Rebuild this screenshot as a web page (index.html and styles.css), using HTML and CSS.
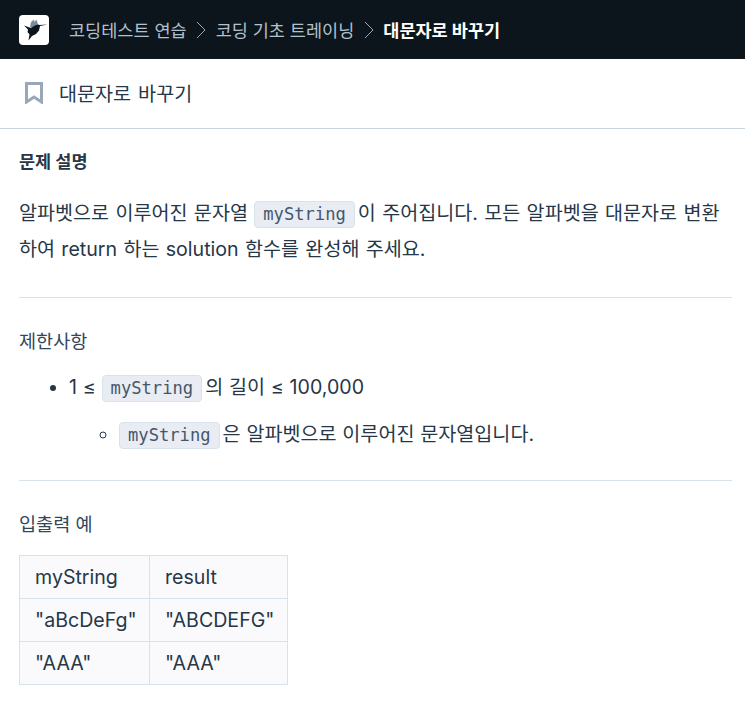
FILE: index.html
```html
<!DOCTYPE html>
<html lang="ko">
<head>
<meta charset="utf-8">
<title>대문자로 바꾸기</title>
<link rel="stylesheet" href="styles.css">
</head>
<body>
<nav class="topbar">
  <div class="logo">
    <svg width="30" height="30" viewBox="0 0 30 30">
      <path class="wing" d="M11 12l1-5 3-2.500.5 2.500 2-2.500 1.500 5-3 5z"/>
      <path class="bird" d="M5 10.500l7 2.500 4-2.500 3-1 1.500 .5 8-.5-7.500 1.500-1 4.500-3 3.500-4 2-3.500 4.500 1-6-2-2.500.5-2.500z"/>
    </svg>
  </div>
  <ol class="crumbs">
    <li class="crumb">코딩테스트 연습</li>
    <li class="sep"><svg width="10" height="18" viewBox="0 0 10 18"><path d="M1 1l8 8-8 8"/></svg></li>
    <li class="crumb">코딩 기초 트레이닝</li>
    <li class="sep"><svg width="10" height="18" viewBox="0 0 10 18"><path d="M1 1l8 8-8 8"/></svg></li>
    <li class="crumb current">대문자로 바꾸기</li>
  </ol>
</nav>
<header class="titlebar">
  <svg class="bookmark" width="18" height="22" viewBox="0 0 18 22"><path d="M1.500 1.500h15v18.500l-7.500-5-7.500 5z"/></svg>
  <span class="title">대문자로 바꾸기</span>
</header>
<main class="content">
  <h5 class="heading">문제 설명</h5>
  <p class="para">알파벳으로 이루어진 문자열 <code class="code">myString</code>이 주어집니다. 모든 알파벳을 대문자로 변환하여 return 하는 solution 함수를 완성해 주세요.</p>
  <hr class="rule">
  <h5 class="subheading">제한사항</h5>
  <ul class="list">
    <li>1 ≤ <code class="code">myString</code>의 길이 ≤ 100,000
      <ul class="sublist">
        <li><code class="code">myString</code>은 알파벳으로 이루어진 문자열입니다.</li>
      </ul>
    </li>
  </ul>
  <hr class="rule rule-second">
  <h5 class="subheading">입출력 예</h5>
  <table class="table">
    <tr><td class="col-a">myString</td><td class="col-b">result</td></tr>
    <tr><td class="col-a">"aBcDeFg"</td><td class="col-b">"ABCDEFG"</td></tr>
    <tr><td class="col-a">"AAA"</td><td class="col-b">"AAA"</td></tr>
  </table>
</main>
</body>
</html>
```
FILE: styles.css
```css
* { box-sizing: border-box; }
html, body { margin: 0; padding: 0; background: #fff; }
body {
  font-family: Inter, "Noto Sans CJK KR", sans-serif;
  color: #263747;
  font-size: 16px;
  overflow: hidden;
  height: 719px;
}
.topbar {
  display: flex;
  align-items: center;
  height: 59px;
  background: #0c151c;
  padding: 0 19px;
}
.logo {
  width: 30px;
  height: 30px;
  background: #fff;
  border-radius: 4px;
  flex: none;
}
.logo svg { display: block; }
.bird { fill: #0c151c; }
.wing { fill: #7d8a99; }
.crumbs {
  display: flex;
  align-items: center;
  list-style: none;
  margin: 0 0 0 20px;
  padding: 0;
  font-size: 17.500px;
  color: #b2c0cc;
}
.sep { display: flex; margin: 0 9.500px; }
.sep path { fill: none; stroke: #98a8b9; stroke-width: 1; }
.current { color: #fff; font-weight: 700; }
.titlebar {
  display: flex;
  align-items: center;
  height: 70px;
  padding: 0 25px 2px;
  border-bottom: 1px solid #c8d5df;
}
.bookmark { flex: none; }
.bookmark path { fill: none; stroke: #98a8b9; stroke-width: 3; }
.title { margin-left: 16px; font-size: 19.600px; word-spacing: 1.500px; color: #263747; }
.content { padding: 0 13px 0 19px; }
.heading { margin: 23px 0 0; font-size: 17.500px; line-height: 20px; font-weight: 700; color: #263747; }
.para { margin: 23px 0 0; font-size: 19.600px; line-height: 36px; word-spacing: 0.800px; }
.code {
  display: inline-block;
  font-family: "DejaVu Sans Mono", monospace;
  font-size: 17.150px;
  line-height: 23px;
  padding: 1px 8px 1px;
  margin-right: 3px;
  background: #e9ecf3;
  border: 1px solid #d7e2eb;
  border-radius: 4px;
  color: #44576c;
}
.rule { border: 0; border-top: 1px solid #d7e2eb; margin: 30px 0 0; }
.rule-second { margin-top: 30px; }
.subheading { margin: 31px 0 0; font-size: 18.600px; line-height: 24px; font-weight: 400; color: #33475b; }
.list { margin: 18px 0 0; padding: 0 0 0 50px; font-size: 19.600px; line-height: 32px; word-spacing: 0.300px; }
.sublist { margin: 15px 0 0; padding: 0 0 0 50px; list-style: circle; }
.table { margin-top: 19px; border-collapse: collapse; table-layout: fixed; width: 268px; background: #fafafc; font-size: 19.600px; }
.table td { border: 1px solid #d7e2eb; height: 43px; padding: 0 15px; line-height: 24px; }
.table .col-a { width: 130px; }
.table .col-b { width: 138px; }
```
